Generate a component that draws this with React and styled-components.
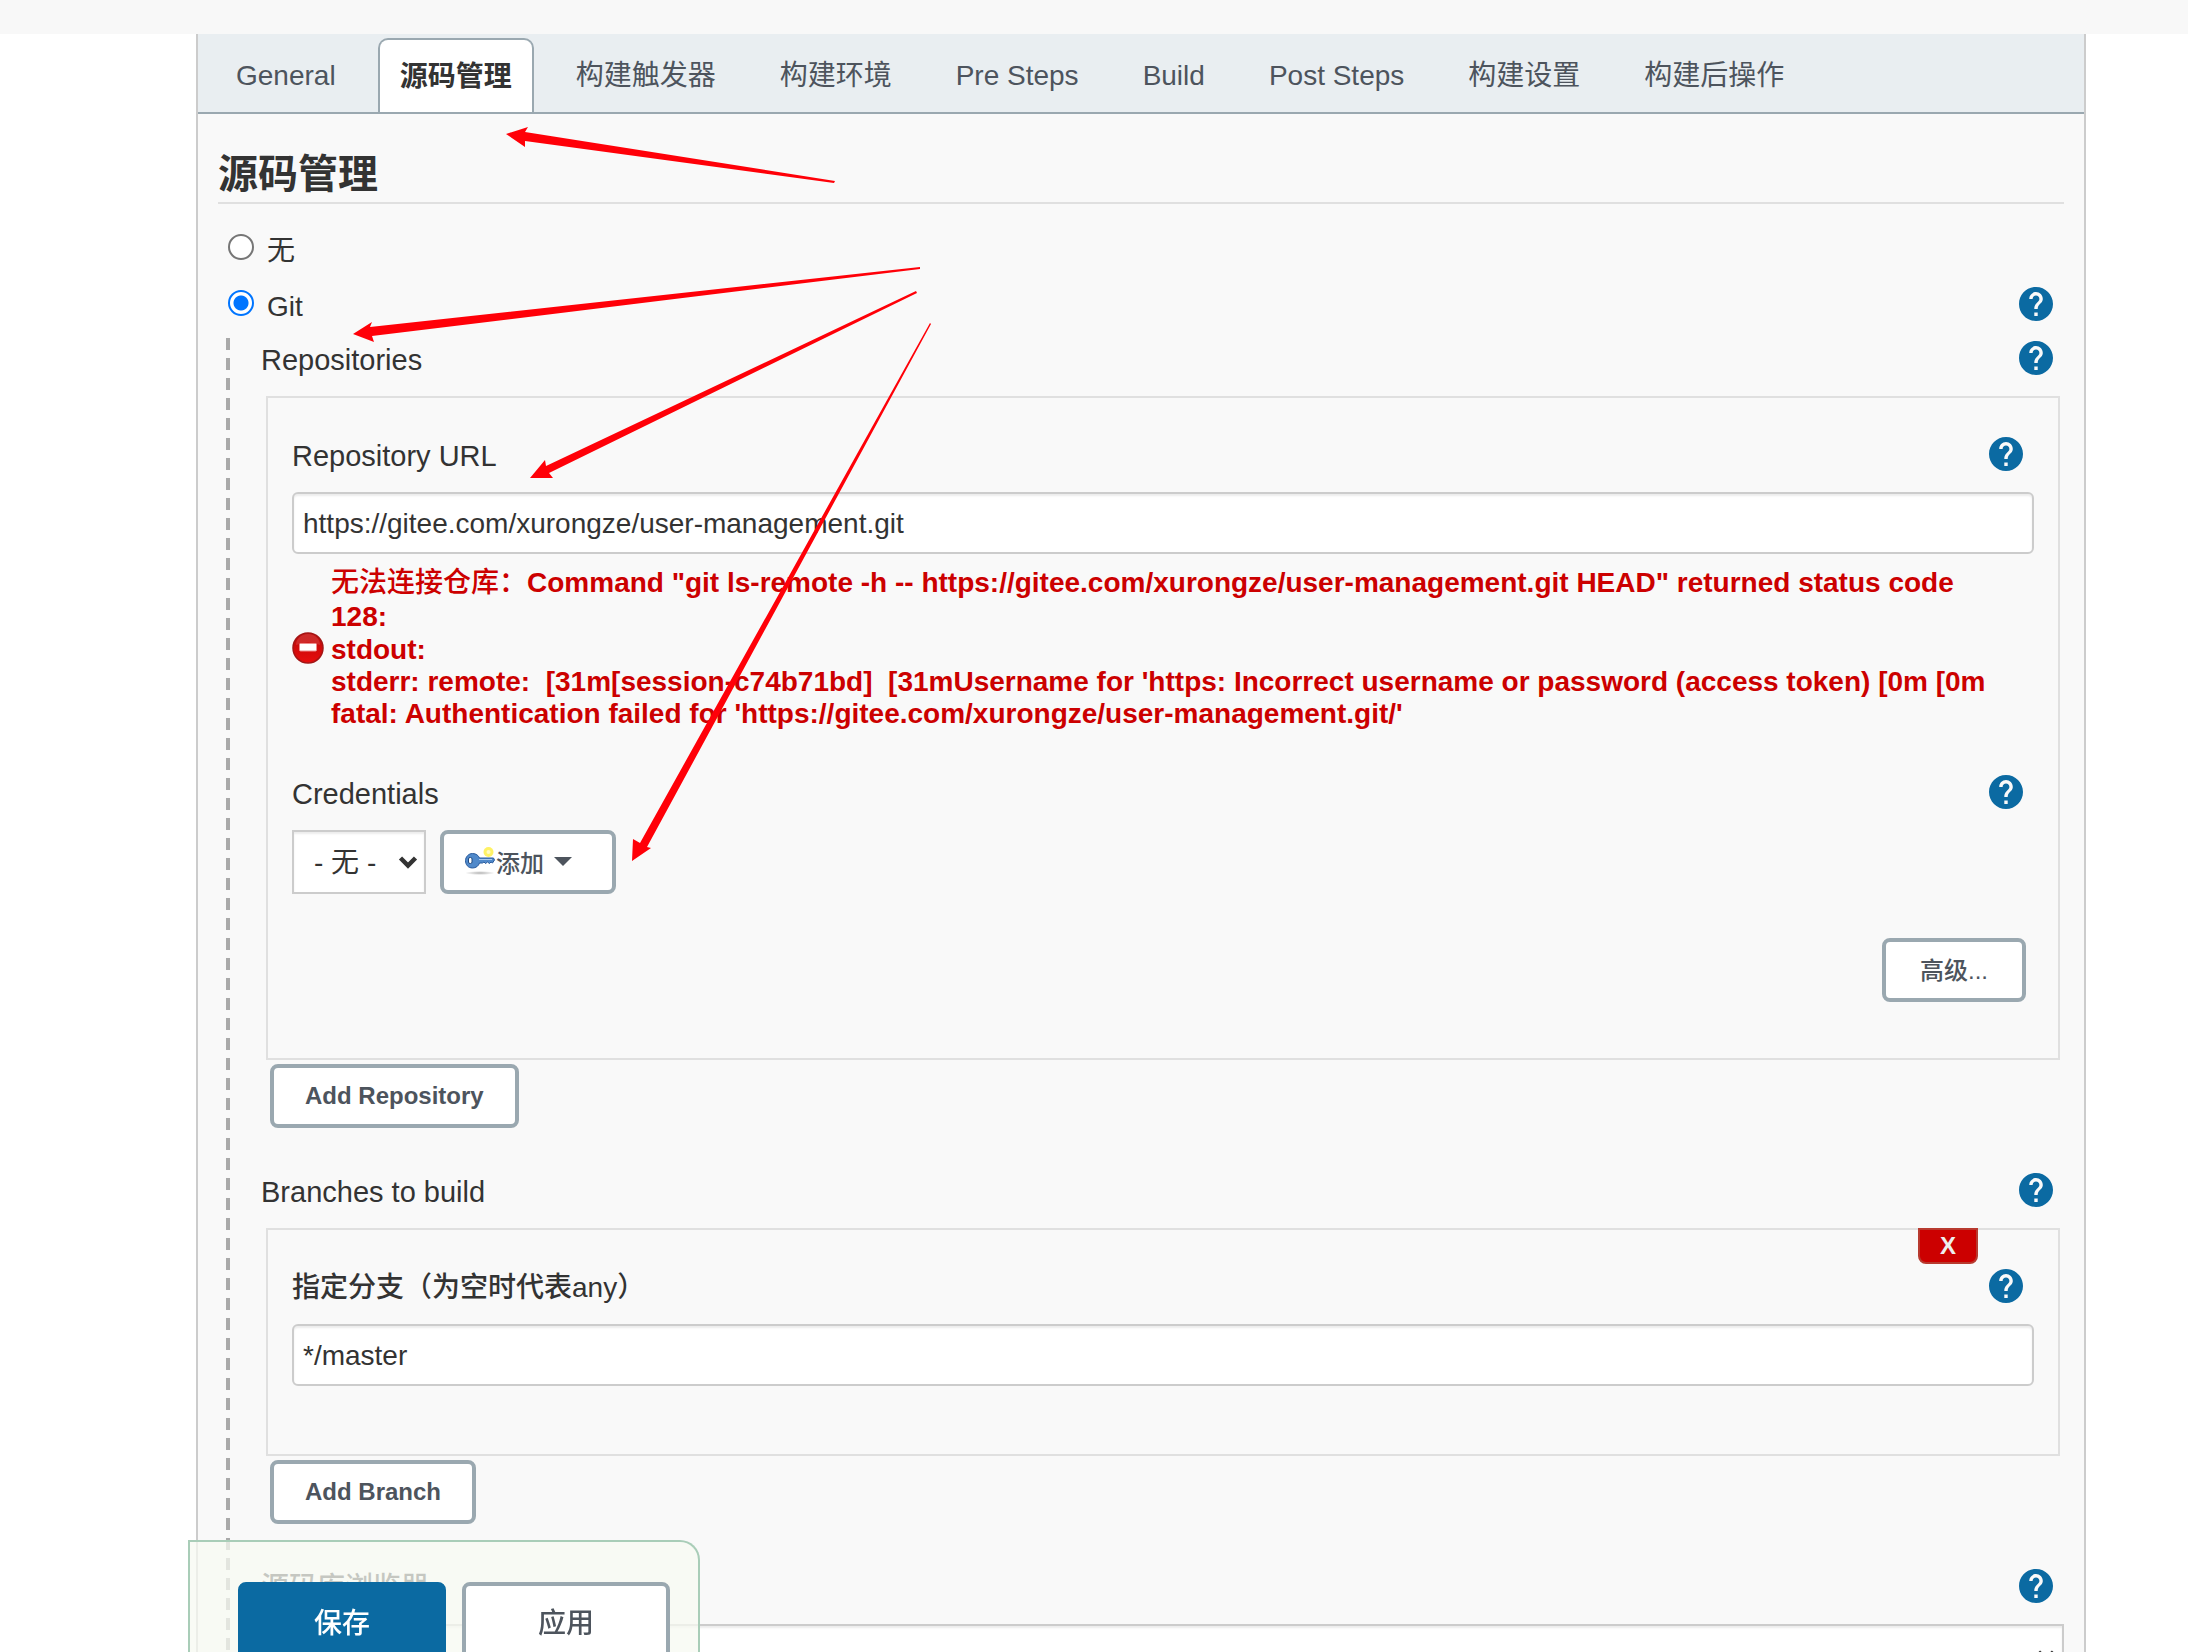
import { useState } from "react";
import styled, { createGlobalStyle } from "styled-components";

const TABS = [
  "General",
  "源码管理",
  "构建触发器",
  "构建环境",
  "Pre Steps",
  "Build",
  "Post Steps",
  "构建设置",
  "构建后操作",
];

export default function App() {
  const [scm, setScm] = useState("git");
  const [url, setUrl] = useState("https://gitee.com/xurongze/user-management.git");
  const [branch, setBranch] = useState("*/master");

  return (
    <Page>
      <GlobalStyle />
      <TopStrip />
      <Panel>
        <TabBar>
          {TABS.map((tab) => (
            <Tab key={tab} href="#scm" $active={tab === "源码管理"}>{tab}</Tab>
          ))}
        </TabBar>
        <Content>
          <Title>源码管理</Title>
          <RadioList>
            <Row>
              <RadioLabel>
                <Radio name="scm" checked={scm === "none"} onChange={() => setScm("none")} />
                无
              </RadioLabel>
            </Row>
            <Row>
              <RadioLabel>
                <Radio name="scm" checked={scm === "git"} onChange={() => setScm("git")} />
                Git
              </RadioLabel>
              <Help />
            </Row>
          </RadioList>

          <Nested>
            <Section>
              <Row>
                <Label as="h3">Repositories</Label>
                <Help />
              </Row>
              <Box>
                <Row>
                  <Label htmlFor="repo-url">Repository URL</Label>
                  <Help />
                </Row>
                <TextInput id="repo-url" value={url} onChange={(e) => setUrl(e.target.value)} />
                <ErrorMessage role="alert">
                  <ErrorIcon />
                  <div>
                    <ErrorLead>
                      <span>无法连接仓库：</span>Command "git ls-remote -h -- https://gitee.com/xurongze/user-management.git HEAD" returned status code<br />128:
                    </ErrorLead>
                    <ErrorLine>stdout:</ErrorLine>
                    <ErrorLine>{"stderr: remote:  [31m[session-c74b71bd]  [31mUsername for 'https: Incorrect username or password (access token) [0m [0m"}</ErrorLine>
                    <ErrorLine>fatal: Authentication failed for 'https://gitee.com/xurongze/user-management.git/'</ErrorLine>
                  </div>
                </ErrorMessage>
                <Row>
                  <Label htmlFor="credentials">Credentials</Label>
                  <Help />
                </Row>
                <Controls>
                  <SelectWrap $width="134px">
                    <Select id="credentials">
                      <option>- 无 -</option>
                    </Select>
                    <Chevron />
                  </SelectWrap>
                  <MenuButton>
                    <KeyIcon />
                    添加
                    <Caret />
                  </MenuButton>
                </Controls>
                <Advanced>
                  <Button $medium>高级...</Button>
                </Advanced>
              </Box>
              <AddButton>Add Repository</AddButton>
            </Section>

            <Section>
              <Row>
                <Label as="h3">Branches to build</Label>
                <Help />
              </Row>
              <Box $short>
                <DeleteButton>X</DeleteButton>
                <Row>
                  <Label htmlFor="branch" $cjk>指定分支（为空时代表any）</Label>
                  <Help />
                </Row>
                <TextInput id="branch" value={branch} onChange={(e) => setBranch(e.target.value)} />
              </Box>
              <AddButton>Add Branch</AddButton>
            </Section>

            <Section>
              <Row>
                <Label htmlFor="browser" $cjk>源码库浏览器</Label>
                <Help />
              </Row>
              <BrowserSelect>
                <Select id="browser" />
                <Chevron />
              </BrowserSelect>
            </Section>
          </Nested>
        </Content>
      </Panel>

      <BottomBar>
        <SaveButton $medium>保存</SaveButton>
        <ApplyButton $medium>应用</ApplyButton>
      </BottomBar>
      <Arrows />
    </Page>
  );
}

function Help() {
  return (
    <HelpLink href="#help" aria-label="Help">
      <svg viewBox="2 2 20 20" width="34" height="34">
        <path
          fill="#0b6aa2"
          d="M12 2C6.48 2 2 6.48 2 12s4.48 10 10 10 10-4.48 10-10S17.52 2 12 2zm1 17h-2v-2h2v2zm2.07-7.75l-.9.92C13.45 12.9 13 13.5 13 15h-2v-.5c0-1.1.45-2.1 1.17-2.83l1.24-1.26c.37-.36.59-.86.59-1.41 0-1.1-.9-2-2-2s-2 .9-2 2H8c0-2.21 1.79-4 4-4s4 1.79 4 4c0 .88-.36 1.68-.93 2.25z"
        />
      </svg>
    </HelpLink>
  );
}

function ErrorIcon() {
  return (
    <svg viewBox="0 0 32 32" width="32" height="32">
      <defs>
        <linearGradient id="stop-fill" x1="0" y1="0" x2="0" y2="1">
          <stop offset="0" stopColor="#c4100f" />
          <stop offset="0.4" stopColor="#cc0a0a" />
          <stop offset="1" stopColor="#e80d0d" />
        </linearGradient>
      </defs>
      <circle cx="16" cy="16" r="15" fill="url(#stop-fill)" stroke="#a31515" strokeWidth="1.5" />
      <path d="M4 13a12 11 0 0 1 24 0q-12 -5 -24 0z" fill="#fff" opacity="0.12" />
      <rect x="7.5" y="11.5" width="17" height="7.5" rx="1" fill="#fff" stroke="#ee8a8a" />
    </svg>
  );
}

function KeyIcon() {
  return (
    <svg viewBox="0 0 32 32" width="32" height="32">
      <defs>
        <radialGradient id="key-shadow">
          <stop offset="0" stopColor="#000" stopOpacity="0.3" />
          <stop offset="1" stopColor="#000" stopOpacity="0" />
        </radialGradient>
      </defs>
      <ellipse cx="16" cy="28" rx="15" ry="2" fill="url(#key-shadow)" />
      <circle cx="24.5" cy="7" r="5" fill="#fff04a" opacity="0.85" />
      <circle cx="24.5" cy="7" r="2" fill="#fffcc4" />
      <path
        d="M8.500 8.500c3.500 0 6 2 7 4.500h14l1 2-2 3-1.500-1-1.500 1.500-2-1.500-2 1.500-1.500-1.500-1.500 1h-3c-1 3-3.500 5-7 5-4.500 0-7-3.500-7-7.300s3-7.200 7-7.200z"
        fill="#5089ca"
        stroke="#295a9c"
      />
      <path d="M15 14.500h13" stroke="#a9c9ee" />
      <rect x="4.500" y="12.500" width="3.500" height="6" rx="1.500" fill="#fff" stroke="#214a80" />
    </svg>
  );
}

function Caret() {
  return (
    <svg viewBox="0 0 18 9" width="18" height="9">
      <path d="M0 0h18L9 9z" fill="#4d545d" />
    </svg>
  );
}

function Chevron() {
  return (
    <ChevronSvg viewBox="0 0 20 14" width="20" height="14">
      <path d="M2.500 3l7.500 7.500L17.500 3" fill="none" stroke="#333" strokeWidth="4.500" />
    </ChevronSvg>
  );
}

// Hand-drawn pointers laid over the form
function Arrows() {
  return (
    <ArrowLayer viewBox="0 0 2188 1652" width="2188" height="1652">
      <path d="M506 134L528 127L525 132L835 181L834 183L525 141L525 147z" />
      <path d="M353 334L372 322L370 327L920 267L920 269L372 336L374 342z" />
      <path d="M530 478L545 460L546 466L916 291L917 293L549 473L553 478z" />
      <path d="M632 861L633 839L640 843L930 323L931 324L647 847L651 848z" />
    </ArrowLayer>
  );
}

const GlobalStyle = createGlobalStyle`
  *{
    box-sizing: border-box;
  }
  body{
    margin: 0;
    background: #fff;
    color: #333;
    font-family: "Liberation Sans", "Noto Sans CJK SC", sans-serif;
    font-size: 28px;
  }
  button, input, select{
    font-family: inherit;
    color: inherit;
    margin: 0;
  }
  svg{
    display: block;
    flex: none;
  }
`;

const Page = styled.div`
  position: relative;
  height: 100vh;
  overflow-x: hidden;
  overflow-y: auto;
  scrollbar-width: none;
`;

const TopStrip = styled.header`
  height: 34px;
  background: #f8f8f8;
`;

const Panel = styled.main`
  margin: 0 102px 0 196px;
  border: solid #ccc;
  border-width: 0 2px;
  background: #f9f9f9;
`;

const TabBar = styled.nav`
  display: flex;
  gap: 20px;
  padding: 4px 16px 0;
  background: #e9eef1;
  border-bottom: 2px solid #9aa8b0;
`;

const Tab = styled.a`
  padding: 2px 20px 0;
  border: 2px solid ${({ $active }) => ($active ? "#9aa8b0" : "transparent")};
  border-bottom: 0;
  border-radius: 10px 10px 0 0;
  background: ${({ $active }) => ($active ? "#fff" : "transparent")};
  color: ${({ $active }) => ($active ? "#333" : "#4d545d")};
  font-weight: ${({ $active }) => ($active ? 700 : 400)};
  line-height: ${({ $active }) => ($active ? "70px" : "68px")};
  white-space: nowrap;
  text-decoration: none;
`;

const Content = styled.div`
  padding: 32px 20px 60px;
`;

const Title = styled.h2`
  margin: 0 0 27px;
  border-bottom: 2px solid #e0e0e0;
  font-size: 40px;
  font-weight: 700;
  line-height: 56px;
`;

const RadioList = styled.div`
  display: grid;
  gap: 18px;
`;

const Row = styled.div`
  display: flex;
  justify-content: space-between;
  align-items: flex-start;
  padding-right: 11px;
  line-height: 38px;
`;

const RadioLabel = styled.label`
  display: flex;
  align-items: flex-start;
  gap: 13px;
  padding-left: 10px;
  line-height: 40px;
  height: 38px;
`;

const Radio = styled.input.attrs({ type: "radio" })`
  appearance: none;
  width: 26px;
  height: 26px;
  margin: 3px 0 0;
  border: 2px solid #767676;
  border-radius: 50%;
  background: #fff;
  &:checked{
    border-color: #0075ff;
    background: radial-gradient(circle, #0075ff 7px, #fff 8px);
  }
`;

const HelpLink = styled.a`
  display: block;
`;

const Nested = styled.div`
  display: grid;
  gap: 45px;
  margin: 13px 0 0 8px;
  padding: 3px 0 0 35px;
  background: repeating-linear-gradient(#a9a9a9 0 12px, transparent 12px 20px) 0 0 / 4px 100% no-repeat;
`;

const Section = styled.section`
  min-width: 0;
`;

const Label = styled.label`
  margin: 0;
  font-size: ${({ $cjk }) => ($cjk ? "28px" : "29px")};
  font-weight: 500;
  line-height: 38px;
`;

const Box = styled.div`
  position: relative;
  margin: 17px 4px 4px 5px;
  padding: 39px 24px ${({ $short }) => ($short ? "68px" : "56px")};
  border: 2px solid #e0e0e0;
`;

const TextInput = styled.input.attrs({ type: "text" })`
  display: block;
  width: 100%;
  height: 62px;
  margin-top: 17px;
  padding: 2px 9px 0;
  border: 2px solid #ccc;
  border-radius: 6px;
  background: #fff;
  box-shadow: inset 0 2px 2px rgba(0, 0, 0, 0.075);
  font-size: 28px;
`;

const ErrorMessage = styled.div`
  display: flex;
  align-items: center;
  gap: 7px;
  margin: 12px 0 45px;
  color: #c00;
  font-weight: 700;
`;

const ErrorLead = styled.p`
  margin: 0;
  line-height: 34px;
  span{
    font-weight: 500;
  }
`;

const ErrorLine = styled.p`
  margin: 0;
  line-height: 32px;
  white-space: pre-wrap;
`;

const Controls = styled.div`
  display: flex;
  gap: 14px;
  margin-top: 17px;
`;

const SelectWrap = styled.div`
  position: relative;
  width: ${({ $width }) => $width || "100%"};
`;

const BrowserSelect = styled(SelectWrap)`
  margin-top: 17px;
`;

const Select = styled.select`
  appearance: none;
  display: block;
  width: 100%;
  height: 64px;
  padding: 0 40px 0 20px;
  border: 2px solid #ccc;
  border-radius: 0;
  background: #fff;
  box-shadow: inset 0 2px 2px rgba(0, 0, 0, 0.075);
  font-size: 28px;
`;

const ChevronSvg = styled.svg`
  position: absolute;
  top: 25px;
  right: 8px;
  pointer-events: none;
`;

const Button = styled.button`
  height: 64px;
  min-width: 144px;
  padding: 0 31px ${({ $medium }) => ($medium ? "3px" : "0")};
  border: 4px solid #9aa8b0;
  border-radius: 8px;
  background: #fff;
  color: #4d545d;
  font-size: 24px;
  font-weight: ${({ $medium }) => ($medium ? 500 : 700)};
`;

const MenuButton = styled(Button)`
  display: flex;
  align-items: center;
  width: 176px;
  padding: 0 20px 2px;
  font-weight: 500;
  svg:last-child{
    margin-left: 10px;
  }
`;

const AddButton = styled(Button)`
  display: block;
  margin-left: 9px;
`;

const Advanced = styled.div`
  display: flex;
  justify-content: flex-end;
  margin: 44px 8px 0 0;
`;

const DeleteButton = styled.button`
  position: absolute;
  top: -2px;
  right: 80px;
  width: 60px;
  height: 36px;
  padding: 0;
  border: 2px solid #b83a2f;
  border-radius: 0 0 8px 8px;
  background: #c00;
  color: #eee;
  font-size: 24px;
  font-weight: 700;
  line-height: 32px;
`;

const BottomBar = styled.footer`
  position: fixed;
  left: 188px;
  bottom: 0;
  display: flex;
  align-items: flex-start;
  gap: 16px;
  height: 112px;
  padding: 40px 28px 0 48px;
  overflow: hidden;
  border: 2px solid #a9cdb8;
  border-bottom: 0;
  border-radius: 0 20px 0 0;
  background: rgba(247, 249, 241, 0.75);
`;

const ApplyButton = styled(Button)`
  flex: none;
  width: 208px;
  height: 80px;
  font-size: 28px;
`;

const SaveButton = styled(ApplyButton)`
  border-color: #0b6aa2;
  background: #0b6aa2;
  color: #fff;
`;

const ArrowLayer = styled.svg`
  position: absolute;
  top: 0;
  left: 0;
  fill: #ff0008;
  pointer-events: none;
`;
